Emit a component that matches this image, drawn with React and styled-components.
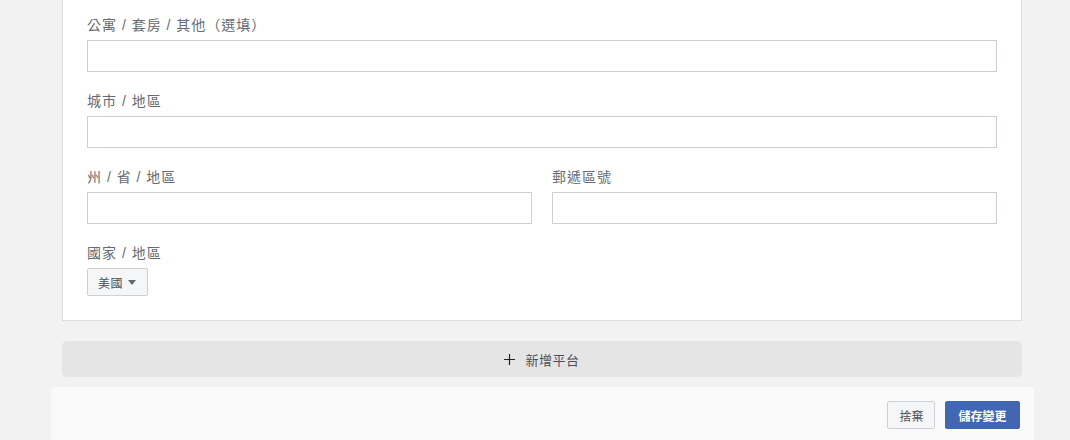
import React from "react";
import styled, { createGlobalStyle } from "styled-components";

const Global = createGlobalStyle`
  html, body { margin: 0; padding: 0; background: #f2f2f2; }
  body {
    font-family: "Liberation Sans", "Noto Sans CJK TC", Arial, sans-serif;
    color: #1d2129;
  }
  * { box-sizing: border-box; }
`;

const Page = styled.div`
  width: 1070px;
  height: 440px;
  overflow: hidden;
  padding-left: 14px;
  display: flex;
  flex-direction: column;
  align-items: center;
`;

const Card = styled.div`
  flex-shrink: 0;
  width: 960px;
  background: #fff;
  border: 1px solid #dddfe2;
  border-top: 0;
  padding: 16px 24px 24px 24px;
  display: flex;
  flex-direction: column;
  gap: 20px;
`;

const Field = styled.div`
  display: flex;
  flex-direction: column;
  gap: 6px;
  flex: 1;
`;

const Row = styled.div`
  display: flex;
  gap: 20px;
`;

const Label = styled.label`
  font-size: 14px;
  letter-spacing: 1px;
  line-height: 18px;
  color: #666b73;
`;

const Input = styled.input`
  height: 32px;
  width: 100%;
  border: 1px solid #ccd0d5;
  border-radius: 0;
  background: #fff;
  padding: 0 8px;
  font-size: 14px;
  outline: none;
`;

const Dropdown = styled.button`
  align-self: flex-start;
  height: 28px;
  display: inline-flex;
  align-items: center;
  gap: 5px;
  padding: 0 11px 0 10px;
  background: #f5f6f7;
  border: 1px solid #ccd0d5;
  border-radius: 2px;
  font-family: inherit;
  font-size: 12px;
  letter-spacing: 0.5px;
  font-weight: normal;
  color: #4b4f56;
`;

const Caret = styled.span`
  width: 0;
  height: 0;
  margin-top: 1px;
  border-left: 4px solid transparent;
  border-right: 4px solid transparent;
  border-top: 5px solid #606770;
`;

const AddBar = styled.button`
  flex-shrink: 0;
  margin-top: 20px;
  width: 960px;
  height: 36px;
  border: 0;
  border-radius: 5px;
  background: #e5e5e5;
  display: flex;
  align-items: center;
  justify-content: center;
  gap: 10px;
  font-family: inherit;
  font-size: 13px;
  letter-spacing: 0.5px;
  color: #4b4f56;
`;

const Footer = styled.div`
  flex-shrink: 0;
  margin-top: 10px;
  width: 983px;
  height: 60px;
  background: #fafafa;
  border-radius: 4px 4px 0 0;
  padding: 14px;
  display: flex;
  justify-content: flex-end;
  gap: 10px;
  align-items: flex-start;
`;

const Button = styled.button`
  height: 28px;
  padding: 0 ${(p) => (p.$primary ? "12px" : "11px")};
  border-radius: 2px;
  border: 1px solid ${(p) => (p.$primary ? "#4267b2" : "#ccd0d5")};
  background: ${(p) => (p.$primary ? "#4267b2" : "#f5f6f7")};
  color: ${(p) => (p.$primary ? "#fff" : "#4b4f56")};
  font-family: inherit;
  font-size: 12px;
  font-weight: ${(p) => (p.$primary ? "bold" : "normal")};
`;

const PlusIcon = () => (
  <svg width="11" height="11" viewBox="0 0 11 11">
    <path d="M5.5 0v11M0 5.5h11" stroke="#1d2129" strokeWidth="1.2" />
  </svg>
);

export default function App() {
  return (
    <Page>
      <Global />
      <Card>
        <Field>
          <Label>公寓 / 套房 / 其他（選填）</Label>
          <Input />
        </Field>
        <Field>
          <Label>城市 / 地區</Label>
          <Input />
        </Field>
        <Row>
          <Field>
            <Label>州 / 省 / 地區</Label>
            <Input />
          </Field>
          <Field>
            <Label>郵遞區號</Label>
            <Input />
          </Field>
        </Row>
        <Field>
          <Label>國家 / 地區</Label>
          <Dropdown>
            美國 <Caret />
          </Dropdown>
        </Field>
      </Card>
      <AddBar>
        <PlusIcon />
        新增平台
      </AddBar>
      <Footer>
        <Button>捨棄</Button>
        <Button $primary>儲存變更</Button>
      </Footer>
    </Page>
  );
}
